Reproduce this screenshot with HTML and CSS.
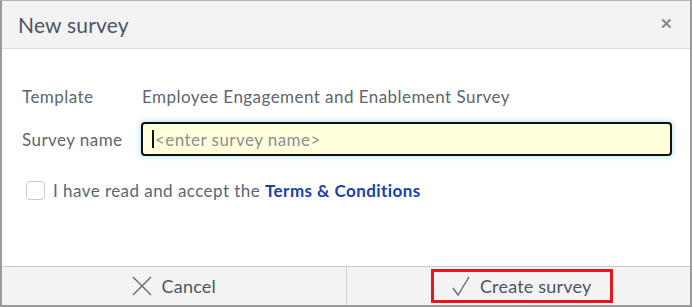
FILE: index.html
```html
<!DOCTYPE html>
<html lang="en">
<head>
    <meta charset="UTF-8">
    <title>New survey</title>
    <link rel="stylesheet" href="styles.css">
</head>
<body>
    <div class="dialog">
        <div class="dialog-header">
            <h1>New survey</h1>
            <span class="close-btn">&#x2715;</span>
        </div>

        <div class="dialog-body">
            <div class="row">
                <span class="label">Template</span>
                <span class="value">Employee Engagement and Enablement Survey</span>
            </div>
            <div class="row">
                <label class="label" for="survey-name">Survey name</label>
                <div class="input-wrap">
                    <span class="caret"></span>
                    <input type="text" id="survey-name" placeholder="<enter survey name>">
                </div>
            </div>
            <div class="terms">
                <span class="checkbox"></span>
                <span>I have read and accept the <a href="#">Terms &amp; Conditions</a></span>
            </div>
        </div>

        <div class="dialog-footer">
            <div class="footer-cell">
                <button class="btn">
                    <svg width="20" height="20" viewBox="0 0 20 20"><path d="M1 1 L19 19 M19 1 L1 19" stroke="#5f6b78" stroke-width="1.4" fill="none"/></svg>
                    Cancel
                </button>
            </div>
            <div class="footer-cell">
                <button class="btn btn-create">
                    <svg width="18" height="20" viewBox="0 0 18 20"><path d="M1 12 L6 19 L17 1" stroke="#5f6b78" stroke-width="1.4" fill="none"/></svg>
                    Create survey
                </button>
            </div>
        </div>
    </div>
</body>
</html>
```

FILE: styles.css
```css
body {
    margin: 0;
    font-family: Lato, "Noto Sans", sans-serif;
    background: #fff;
}
.dialog {
    width: 692px;
    height: 307px;
    box-sizing: border-box;
    border: 2px solid #9a9a9a;
    border-top: 1px solid #b0b0b0;
    display: flex;
    flex-direction: column;
}
.dialog-header {
    height: 47px;
    background: #f3f3f3;
    border-bottom: 1px solid #dcdcdc;
    display: flex;
    align-items: center;
    justify-content: space-between;
    padding: 0 17px 0 16px;
}
.dialog-header h1 {
    margin: 0;
    font-weight: normal;
    font-size: 21px;
    letter-spacing: 0.2px;
    color: #4b5563;
}
.close-btn {
    color: #8a8a8a;
    font-size: 15px;
    font-weight: bold;
    margin-top: -3px;
}
.dialog-body {
    flex: 1;
    padding: 34px 18px 0 20px;
    font-size: 17px;
    letter-spacing: 0.45px;
}
.row {
    display: flex;
    align-items: center;
    margin-bottom: 13px;
}
.row:first-child {
    height: 26px;
}
.label {
    width: 120px;
    color: #5a6673;
}
.value {
    color: #5a6673;
}
.input-wrap {
    flex: 1;
    position: relative;
    margin-left: -1px;
}
.caret {
    position: absolute;
    left: 11px;
    top: 8px;
    width: 2px;
    height: 18px;
    background: #111;
}
.input-wrap input {
    width: 100%;
    height: 34px;
    box-sizing: border-box;
    background: #ffffdc;
    border: 2px solid #111;
    border-radius: 4px;
    box-shadow: 0 0 4px 2px #c9ecfb;
    padding: 0 10px 0 12px;
    font-family: inherit;
    font-size: 17px;
    letter-spacing: 0.45px;
    outline: none;
}
.input-wrap input::placeholder {
    color: #8a8f96;
}
.terms {
    display: flex;
    align-items: center;
    gap: 8px;
    margin: 24px 0 0 4px;
    color: #5a6673;
}
.checkbox {
    width: 17px;
    height: 17px;
    border: 1px solid #c6cbd3;
    border-radius: 4px;
}
.terms a {
    color: #1a40b0;
    font-weight: bold;
    text-decoration: none;
}
.dialog-footer {
    height: 38px;
    background: #f3f3f3;
    border-top: 1px solid #c3cbd6;
    display: flex;
}
.footer-cell {
    flex: 1;
    display: flex;
    align-items: center;
    justify-content: center;
}
.footer-cell:first-child {
    border-right: 1px solid #d0d4da;
}
.btn {
    display: flex;
    align-items: center;
    gap: 10px;
    background: none;
    border: none;
    font-family: inherit;
    font-size: 18px;
    letter-spacing: 0.2px;
    color: #4b5563;
    padding: 0;
}
.btn-create {
    border: 3px solid #e8141e;
    height: 34px;
    width: 182px;
    justify-content: center;
    box-sizing: border-box;
    padding: 0;
    margin-left: 7px;
}
```
